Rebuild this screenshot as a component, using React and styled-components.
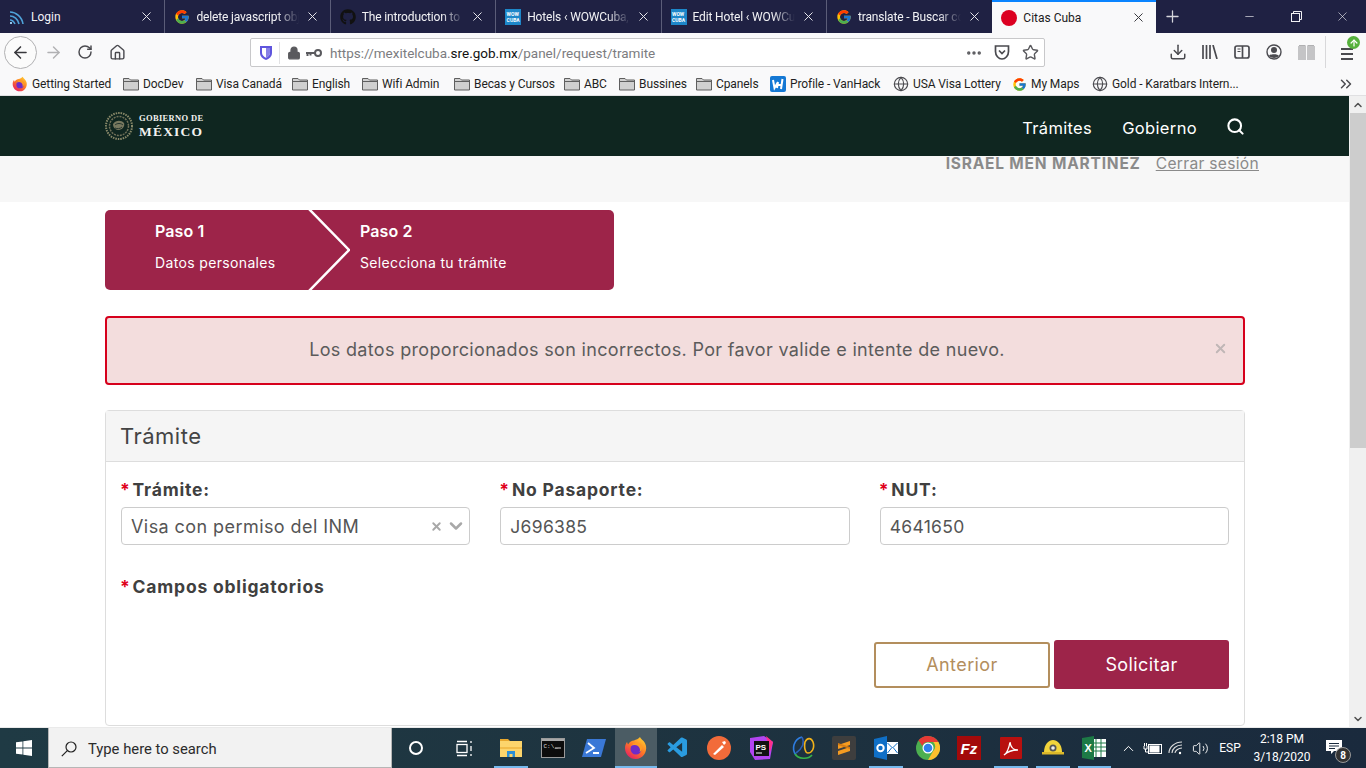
import React from 'react';
import styled, { createGlobalStyle } from 'styled-components';
import {
  ArrowLeft, ArrowRight, ArrowUp, RotateCw, Home, Lock, MoreHorizontal, Star, Download,
  ChevronsRight, Globe, Search, X, Plus, Minus, ChevronUp, ChevronDown, Volume2,
} from 'lucide-react';
import { FcGoogle } from 'react-icons/fc';
import { FaGithub } from 'react-icons/fa';
import { VscVscode } from 'react-icons/vsc';

const GlobalStyle = createGlobalStyle`
  html, body { margin: 0; padding: 0; height: 100%; overflow: hidden; background: #fff; }
  * { box-sizing: border-box; }
  #root { height: 100%; }
`;

const SITE_FONT = '"Inter", "Open Sans", sans-serif';
const UI_FONT = '"Roboto", "Noto Sans", sans-serif';

const Screen = styled.div`
  display: flex;
  flex-direction: column;
  width: 1366px;
  height: 768px;
  font-family: ${UI_FONT};
`;

/* ---------- browser tabs ---------- */
const TabStrip = styled.div`
  display: flex;
  align-items: stretch;
  height: 33px;
  background: #1f2143;
  flex: none;
`;

const Tab = styled.div`
  display: flex;
  align-items: center;
  gap: 6px;
  flex: none;
  width: ${p => (p.$active ? '164px' : '165.4px')};
  padding: 0 10px 0 9px;
  font-size: 12px;
  color: ${p => (p.$active ? '#1c1b22' : '#f2f2f5')};
  background: ${p => (p.$active ? '#f9f9fa' : 'transparent')};
  border-top: ${p => (p.$active ? '2px solid #0a84ff' : 'none')};
  border-right: ${p => (p.$active || p.$noline ? 'none' : '1px solid #5b5d78')};
`;

const TabTitle = styled.span`
  flex: 1;
  min-width: 0;
  white-space: nowrap;
  ${p => p.$fade && 'letter-spacing: -0.15px; mask-image: linear-gradient(to right, #000 78%, transparent 100%);'}
`;

const NewTab = styled.div`
  display: flex;
  align-items: center;
  justify-content: center;
  width: 32px;
  color: #d5d5dc;
`;

const WindowControls = styled.div`
  display: flex;
  margin-left: auto;
`;

const WindowButton = styled.div`
  display: flex;
  align-items: center;
  justify-content: center;
  width: 46.5px;
  color: #f0f0f4;
`;

const WowIcon = styled.span`
  display: flex;
  flex-direction: column;
  align-items: center;
  justify-content: center;
  flex: none;
  width: 16px;
  height: 16px;
  background: #1d87c9;
  color: #fff;
  font: 700 5px/6px ${UI_FONT};
`;

const RedDot = styled.span`
  flex: none;
  width: 16px;
  height: 16px;
  border-radius: 50%;
  background: #dc0021;
`;

/* ---------- browser toolbar ---------- */
const NavBar = styled.div`
  display: flex;
  align-items: center;
  height: 38px;
  padding-left: 4px;
  background: #f9f9fa;
  flex: none;
`;

const BackCircle = styled.div`
  display: flex;
  align-items: center;
  justify-content: center;
  width: 33px;
  height: 33px;
  border: 1px solid #b1b1b3;
  border-radius: 50%;
  color: #38383d;
  background: #fbfbfb;
`;

const ToolSlot = styled.div`
  display: flex;
  align-items: center;
  justify-content: center;
  position: relative;
  flex: none;
  width: 32px;
  height: 32px;
  color: ${p => p.$color || '#4a4a4f'};
`;

const UrlBar = styled.div`
  display: flex;
  align-items: center;
  width: 795px;
  height: 29px;
  margin: 1px 117px 0 117px;
  padding-left: 8px;
  background: #fff;
  border: 1px solid #c8c8ca;
  border-radius: 2px;
  flex: none;
`;

const UrlDivider = styled.span`
  width: 1px;
  height: 22px;
  margin: 0 5px 0 6px;
  background: #e2e2e4;
`;

const UrlText = styled.div`
  flex: 1;
  margin-left: 5px;
  font-size: 13.5px;
  color: #7c7c80;
  white-space: nowrap;
  b { font-weight: 400; color: #111; }
`;

const UrlIcon = styled.span`
  display: flex;
  align-items: center;
  justify-content: center;
  flex: none;
  width: ${p => p.$w || 28}px;
  color: #5a5a5e;
`;

const ToolDivider = styled.span`
  width: 1px;
  height: 32px;
  margin: 0 5px 0 3px;
  background: #d8d8da;
`;

const UpdateBadge = styled.span`
  position: absolute;
  top: 0;
  right: 3px;
  display: flex;
  align-items: center;
  justify-content: center;
  width: 13px;
  height: 13px;
  border-radius: 50%;
  background: #56b13c;
  color: #fff;
`;

const Burger = styled.span`
  display: block;
  width: 12px;
  height: 12px;
  margin-top: 3px;
  border-top: 2px solid #4a4a4f;
  border-bottom: 2px solid #4a4a4f;
  position: relative;
  &::after {
    content: '';
    position: absolute;
    left: 0;
    right: 0;
    top: 3px;
    height: 2px;
    background: #4a4a4f;
  }
`;

/* ---------- bookmarks ---------- */
const BookmarkBar = styled.div`
  display: flex;
  align-items: center;
  height: 25px;
  padding: 2px 0 0 12px;
  background: #f9f9fa;
  border-bottom: 1px solid #e0e0e2;
  flex: none;
`;

const Bookmark = styled.div`
  display: flex;
  align-items: center;
  gap: 4px;
  flex: none;
  width: ${p => p.$w}px;
  font-size: 12px;
  letter-spacing: -0.1px;
  color: #1f1f22;
  white-space: nowrap;
`;

const BookmarkMore = styled.div`
  display: flex;
  margin-left: auto;
  margin-right: 11px;
  color: #4a4a4f;
`;

/* ---------- page ---------- */
const PageArea = styled.div`
  display: flex;
  flex: 1;
  min-height: 0;
  border-bottom: 1px solid #eaeaea;
`;

const Page = styled.main`
  flex: 1;
  min-width: 0;
  overflow: hidden;
  font-family: ${SITE_FONT};
  background: #fff;
`;

const ScrollBar = styled.div`
  display: flex;
  flex-direction: column;
  flex: none;
  width: 17px;
  background: #f0f0f0;
`;

const ScrollArrow = styled.div`
  display: flex;
  align-items: center;
  justify-content: center;
  height: 17px;
  color: #505050;
`;

const ScrollThumb = styled.div`
  height: 335px;
  margin-left: 1px;
  background: #cdcdcd;
`;

const ScrollGap = styled.div`
  flex: 1;
`;

const GovHeader = styled.header`
  display: flex;
  align-items: center;
  justify-content: space-between;
  height: 60px;
  padding: 0 104px 0 105px;
  background: #0f2620;
`;

const Logo = styled.div`
  display: flex;
  align-items: center;
  gap: 6px;
`;

const LogoText = styled.div`
  margin-top: -2px;
  font-family: "Liberation Serif", serif;
  font-weight: 700;
  color: #f3f3f0;
  span { display: block; }
`;

const LogoTop = styled.span`
  font-size: 8.5px;
  line-height: 10px;
  letter-spacing: 0.35px;
`;

const LogoMain = styled.span`
  margin-top: 2px;
  font-size: 13.5px;
  line-height: 13px;
  letter-spacing: 1.2px;
`;

const GovNav = styled.nav`
  display: flex;
  align-items: center;
  gap: 30px;
  padding-top: 4px;
  color: #fff;
  font-size: 16.5px;
  letter-spacing: 0.35px;
`;

const SearchLink = styled.span`
  display: flex;
  margin-left: -1px;
  margin-top: -3px;
`;

const UserStrip = styled.div`
  display: flex;
  justify-content: flex-end;
  align-items: flex-start;
  gap: 15px;
  height: 46px;
  padding-right: 90px;
  background: #f7f7f7;
  color: #8a8a8a;
  line-height: 16px;
`;

const UserName = styled.strong`
  font-size: 15.5px;
  font-weight: 700;
  letter-spacing: 0.8px;
`;

const Logout = styled.a`
  font-size: 15.6px;
  letter-spacing: 0.3px;
  text-decoration: underline;
`;

const Content = styled.div`
  width: 1140px;
  margin-left: 105px;
`;

const Steps = styled.div`
  display: flex;
  position: relative;
  width: 509px;
  height: 80px;
  margin-top: 8px;
  background: #9d2449;
  border-radius: 5px;
  color: #fff;
`;

const Step = styled.div`
  flex: none;
  width: ${p => p.$w}px;
  padding: 12px 0 0 50px;
`;

const StepTitle = styled.div`
  font-size: 16px;
  line-height: 18px;
  font-weight: 600;
  letter-spacing: 0.1px;
`;

const StepText = styled.div`
  margin-top: 14px;
  font-size: 14px;
  line-height: 18px;
  letter-spacing: 0.35px;
`;

const StepArrow = styled.svg`
  position: absolute;
  left: 203px;
  top: 0;
`;

const Alert = styled.div`
  display: flex;
  align-items: center;
  justify-content: center;
  position: relative;
  height: 69px;
  margin-top: 26px;
  padding: 0 36px 2px 0;
  background: #f3dddd;
  border: 2px solid #d6001c;
  border-radius: 4px;
  color: #5b5b5b;
  font-size: 18px;
  letter-spacing: 0.33px;
`;

const AlertClose = styled.span`
  position: absolute;
  right: 15px;
  top: 23px;
  display: flex;
  color: #c0b6b6;
`;

const Card = styled.section`
  height: 316px;
  margin-top: 25px;
  border: 1px solid #ddd;
  border-radius: 4px;
`;

const CardHeader = styled.div`
  display: flex;
  align-items: center;
  height: 51px;
  padding-left: 14px;
  background: #f5f5f5;
  border-bottom: 1px solid #ddd;
  color: #444;
  font-size: 22px;
  letter-spacing: 0.5px;
`;

const CardBody = styled.div`
  padding: 18px 15px 0;
`;

const FormGrid = styled.div`
  display: grid;
  grid-template-columns: repeat(3, 1fr);
  gap: 30px;
`;

const Label = styled.label`
  display: block;
  height: 18px;
  color: #404040;
  font-size: 17.5px;
  line-height: 20px;
  font-weight: 700;
  letter-spacing: 0.8px;
  i { font-style: normal; color: #e0001b; margin-right: 2px; margin-left: -1px; }
`;

const Field = styled.div`
  display: flex;
  align-items: center;
  height: 38px;
  margin-top: 9px;
  padding: 0 9px;
  background: #fff;
  border: 1px solid #ccc;
  border-radius: 4px;
  color: #555;
  font-size: 17.5px;
  letter-spacing: 0.3px;
`;

const FieldValue = styled.span`
  flex: 1;
  ${p => p.$large && 'font-size: 18px; letter-spacing: 0.43px;'}
`;

const SelectIcons = styled.span`
  display: flex;
  align-items: center;
  gap: 3px;
  margin-right: -6px;
  color: #a8a8a8;
`;

const Required = styled(Label)`
  margin-top: 32px;
`;

const Actions = styled.div`
  display: flex;
  justify-content: flex-end;
  align-items: center;
  gap: 4px;
  margin-top: 45px;
`;

const Button = styled.button`
  height: ${p => (p.$primary ? '49px' : '46px')};
  width: ${p => (p.$primary ? '175px' : '176px')};
  padding: 0;
  background: ${p => (p.$primary ? '#9d2449' : '#fff')};
  border: ${p => (p.$primary ? 'none' : '2px solid #b38e5d')};
  border-radius: 3px;
  color: ${p => (p.$primary ? '#fff' : '#b38e5d')};
  font-family: ${SITE_FONT};
  font-size: 18px;
  letter-spacing: 0.4px;
`;

/* ---------- windows taskbar ---------- */
const Taskbar = styled.footer`
  display: flex;
  align-items: stretch;
  height: 40px;
  background: linear-gradient(to right, #1f3a44, #1e3440 45%, #1a2a3d);
  flex: none;
  color: #fff;
`;

const StartButton = styled.div`
  display: flex;
  align-items: center;
  justify-content: center;
  flex: none;
  width: 48px;
`;

const TaskSearch = styled.div`
  display: flex;
  align-items: center;
  gap: 11px;
  flex: none;
  width: 344px;
  padding: 2px 0 0 12px;
  background: #f2f2f2;
  border: 1px solid #b6b6b6;
  border-top: none;
  color: #2b2b2b;
  font-size: 14.8px;
`;

const SystemButton = styled.div`
  display: flex;
  align-items: center;
  justify-content: center;
  flex: none;
  width: 48px;
`;

const AppSlot = styled.div`
  display: flex;
  align-items: center;
  justify-content: center;
  position: relative;
  flex: none;
  width: 41.7px;
  background: ${p => (p.$active ? '#4b5c64' : 'transparent')};
  &::after {
    content: '';
    display: ${p => (p.$open ? 'block' : 'none')};
    position: absolute;
    left: ${p => (p.$active ? 0 : 4)}px;
    right: ${p => (p.$active ? 0 : 4)}px;
    bottom: 0;
    height: 2px;
    background: #76b9ed;
  }
`;

const AppRow = styled.div`
  display: flex;
  flex: none;
  margin-left: 2px;
`;

const Tray = styled.div`
  display: flex;
  align-items: center;
  margin-left: auto;
`;

const TrayIcon = styled.span`
  display: flex;
  align-items: center;
  justify-content: center;
  width: ${p => p.$w || 24}px;
`;

const TrayLang = styled.span`
  width: 36px;
  text-align: center;
  font-size: 12px;
`;

const Clock = styled.div`
  width: 64px;
  margin-left: 2px;
  text-align: center;
  font-size: 12px;
  line-height: 18px;
`;

const Notify = styled.div`
  display: flex;
  align-items: center;
  justify-content: center;
  position: relative;
  width: 40px;
  height: 40px;
  margin-right: 12px;
`;

const NotifyBadge = styled.span`
  position: absolute;
  right: 3px;
  bottom: 5px;
  display: flex;
  align-items: center;
  justify-content: center;
  width: 16px;
  height: 16px;
  border-radius: 50%;
  background: #333;
  border: 1px solid #999;
  font-size: 10px;
  font-weight: 700;
`;

const CmdText = styled.text`
  font-family: "Liberation Mono", monospace;
  font-size: 6px;
  fill: #ddd;
`;

const IconText = styled.text`
  font-family: "Liberation Sans", sans-serif;
  font-weight: 700;
  fill: #fff;
`;

/* ---------- drawn icons ---------- */
const FolderIcon = () => (
  <svg width="16" height="16" viewBox="0 0 16 16">
    <path d="M.5 2.500h5.500l1.500 1.500h8v10h-15z" fill="#d0d0d0" stroke="#5f5f5f" />
    <path d="M1 5.500h14" stroke="#5f5f5f" />
  </svg>
);

const FirefoxIcon = ({ size = 16 }) => (
  <svg width={size} height={size} viewBox="0 0 24 24">
    <defs>
      <linearGradient id={`ff${size}`} x1="0.8" y1="0" x2="0.1" y2="1">
        <stop offset="0" stopColor="#ffcf2f" />
        <stop offset="0.45" stopColor="#ff7a25" />
        <stop offset="1" stopColor="#e3116c" />
      </linearGradient>
    </defs>
    <path d="M16 1c1 2.500 5 4 6 9 1.200 6-3 13-10.500 13C5.500 23 1 18 1 12c0-2.500.8-4.500 2-6l1 2.500C5.500 6 8 4.500 10 4.500 12 3.500 14.500 3 16 1z" fill={`url(#ff${size})`} />
    <circle cx="12" cy="13" r="5.500" fill="#6f2bc7" />
    <path d="M7 10c2-1.500 5-1.500 7 0 2 1.800 2.500 4 1.500 6 3-1 3.500-5 1.500-7.500C14.500 5.500 9 6.500 7 10z" fill="#ff9b24" />
  </svg>
);

const LoginFavicon = () => (
  <svg width="16" height="16" viewBox="0 0 16 16" fill="none" stroke="#4fa3d9" strokeWidth="1.600">
    <path d="M1 3c6 0 12 5 13 12M1 7c4 0 8 3 9 8M1 11c2 0 4 2 5 4" />
    <path d="M1 14h2" stroke="#8fc6ea" strokeWidth="2" />
  </svg>
);

const VanHackIcon = () => (
  <svg width="16" height="16" viewBox="0 0 16 16">
    <rect width="16" height="16" rx="2" fill="#1478d4" />
    <path d="M3 4l1.500 8L8 6M8 6l-1 6M12.500 3l-1.500 10M7.500 9h4" stroke="#fff" strokeWidth="2" fill="none" />
  </svg>
);

const ShieldIcon = () => (
  <svg width="14" height="16" viewBox="0 0 14 16">
    <path d="M1 1h12v7c0 3.500-3 6-6 7-3-1-6-3.500-6-7z" fill="#5f55dd" />
    <path d="M3 3h8v5c0 2.300-2 3.800-4 4.700-2-.9-4-2.400-4-4.700z" fill="#fff" />
    <path d="M7 3h4v5c0 2.300-2 3.800-4 4.700z" fill="#5f55dd" opacity=".75" />
  </svg>
);

const KeyIcon = () => (
  <svg width="17" height="10" viewBox="0 0 17 10" fill="none">
    <circle cx="12" cy="5" r="3" stroke="#5a5a5e" strokeWidth="2" />
    <path d="M0 5h9M1.500 5v3M4.500 5v2.500" stroke="#5a5a5e" strokeWidth="2" />
  </svg>
);

const PocketIcon = () => (
  <svg width="16" height="15" viewBox="0 0 16 15" fill="none" stroke="#4a4a4f" strokeWidth="1.700">
    <path d="M1.500 1h13v5.500C14.500 10.500 11.500 14 8 14S1.500 10.500 1.500 6.500z" />
    <path d="M5 5.500l3 3 3-3" />
  </svg>
);

const LibraryIcon = () => (
  <svg width="16" height="14" viewBox="0 0 16 14" stroke="#4a4a4f" strokeWidth="1.700" fill="none">
    <path d="M1 0v14M4.500 0v14M8 0v14M11 0l4 14" />
  </svg>
);

const SidebarIcon = () => (
  <svg width="16" height="14" viewBox="0 0 16 14" fill="none" stroke="#4a4a4f">
    <rect x="1" y="1" width="14" height="12" rx="2" strokeWidth="1.700" />
    <path d="M8.500 1v12" strokeWidth="1.700" />
    <path d="M3.500 4h3M3.500 6.500h3" />
  </svg>
);

const AccountIcon = () => (
  <svg width="16" height="16" viewBox="0 0 16 16" fill="none">
    <circle cx="8" cy="8" r="7" stroke="#4a4a4f" strokeWidth="1.400" />
    <circle cx="8" cy="6" r="3" fill="#4a4a4f" />
    <path d="M3 12c1-2.500 9-2.500 10 0-2.500 2.500-7.500 2.500-10 0z" fill="#4a4a4f" />
  </svg>
);

const ReaderIcon = () => (
  <svg width="17" height="15" viewBox="0 0 17 15">
    <path d="M0 1h8v14H0zM9 1h8v14H9z" fill="#c4c4c6" />
    <path d="M1 0h6.500v1H1zM9.500 0H16v1H9.500z" fill="#b0b0b2" />
  </svg>
);

const RestoreIcon = () => (
  <svg width="11" height="11" viewBox="0 0 11 11" fill="none" stroke="#f0f0f4">
    <rect x=".5" y="2.500" width="8" height="8" />
    <path d="M2.500 2.500v-2h8v8h-2" />
  </svg>
);

const Seal = () => (
  <svg width="28" height="28" viewBox="0 0 28 28" fill="none">
    <circle cx="14" cy="14" r="13" stroke="#8a8a6a" strokeWidth="2" strokeDasharray="1.500 1" />
    <circle cx="14" cy="14" r="9.500" stroke="#6f7058" strokeWidth="1.500" strokeDasharray="2 1" />
    <path d="M8 12c3-4 8-4 11-1 1 3-1 6-5 7-3 0-6-2-6-6z" fill="#77785f" />
    <path d="M10 13c2-2 6-2 8 0M10 16c2 1 5 1 7-1" stroke="#24352e" />
  </svg>
);

const WindowsLogo = () => (
  <svg width="16" height="16" viewBox="0 0 16 16" fill="#fff">
    <path d="M0 2.300l6.500-.9v6.200H0zM7.300 1.300L16 0v7.600H7.300zM0 8.400h6.500v6.200L0 13.700zM7.300 8.400H16V16l-8.700-1.200z" />
  </svg>
);

const SearchGlass = () => (
  <svg width="16" height="16" viewBox="0 0 16 16" fill="none" stroke="#222" strokeWidth="1.200">
    <circle cx="10" cy="6" r="5" />
    <path d="M6.300 9.700L.8 15.200" />
  </svg>
);

const TaskViewIcon = () => (
  <svg width="17" height="17" viewBox="0 0 17 17" fill="none" stroke="#fff" strokeWidth="1.300">
    <rect x="1" y="4.500" width="10" height="8" />
    <path d="M1 1.500h10M1 15.500h10M15 1v2M15 6v5M15 14v2" />
  </svg>
);

const ExplorerIcon = () => (
  <svg width="24" height="24" viewBox="0 0 24 24">
    <path d="M1 3h8l2 2H1z" fill="#e8a82e" />
    <path d="M1 5h22v16H1z" fill="#fcd56c" />
    <path d="M1 11h22v2H1z" fill="#f2bd4a" />
    <path d="M8 15h8v6h-2.500v-3h-3v3H8z" fill="#2d8fd5" />
  </svg>
);

const CmdIcon = () => (
  <svg width="24" height="20" viewBox="0 0 24 20">
    <rect x=".5" y=".5" width="23" height="19" fill="#0c0c0c" stroke="#9a9a9a" />
    <rect x="1" y="1" width="22" height="2" fill="#a8a8a8" />
    <CmdText x="2.500" y="10">C:\_</CmdText>
    <path d="M14 10h6" stroke="#ddd" />
  </svg>
);

const PowerShellIcon = () => (
  <svg width="24" height="20" viewBox="0 0 24 20">
    <path d="M5 1h19l-5 18H0z" fill="#3a78d6" />
    <path d="M6 5l6 5-8 5M11 15h6" stroke="#fff" strokeWidth="1.800" fill="none" />
  </svg>
);

const PostmanIcon = () => (
  <svg width="24" height="24" viewBox="0 0 24 24">
    <circle cx="12" cy="12" r="12" fill="#f26b3a" />
    <path d="M6 18l9-9 2 2-9 8zM15 6l3-1 1 2-2 2z" fill="#fff" />
  </svg>
);

const PhpStormIcon = () => (
  <svg width="24" height="24" viewBox="0 0 24 24">
    <path d="M1 2l14-2 9 6-3 17-15 1-5-8z" fill="#b345f1" />
    <path d="M17 0l7 6-3 10z" fill="#ff318c" />
    <rect x="5" y="5" width="15" height="15" fill="#111" />
    <IconText x="6.500" y="14" fontSize="8">PS</IconText>
    <path d="M7 17h6" stroke="#fff" />
  </svg>
);

const RingsIcon = () => (
  <svg width="24" height="26" viewBox="0 0 24 26" fill="none" strokeWidth="1.600">
    <path d="M5 20C0 14 3 4 11 2" stroke="#2e7de0" />
    <path d="M11 2c3 6 0 12-6 16" stroke="#2c5fb8" />
    <path d="M14 7c2-4 6-5 8 0 2 6-1 11-5 11-3 0-4-6-3-11z" stroke="#f2b21a" />
    <path d="M4 19c3 5 13 6 17 1" stroke="#37b34a" />
  </svg>
);

const SublimeIcon = () => (
  <svg width="24" height="24" viewBox="0 0 24 24">
    <rect width="24" height="24" rx="2" fill="#3e3e3e" />
    <path d="M18 5v4L6 13V9zM18 11v4L6 19v-4z" fill="#f59b21" />
    <path d="M6 9l12 4v-2L6 7z" fill="#d47b12" />
  </svg>
);

const OutlookIcon = () => (
  <svg width="24" height="24" viewBox="0 0 24 24">
    <path d="M0 3l13-3v24L0 21z" fill="#0f6fc6" />
    <rect x="13" y="6" width="11" height="12" fill="#fff" />
    <path d="M13.500 7l5 5 5-5M13.500 17l4-5M23.500 17l-4-5" stroke="#0f6fc6" fill="none" />
    <circle cx="6.500" cy="12" r="3.200" stroke="#fff" strokeWidth="2" fill="none" />
  </svg>
);

const ChromeIcon = () => (
  <svg width="24" height="24" viewBox="0 0 24 24">
    <circle cx="12" cy="12" r="12" fill="#4caf50" />
    <path d="M12 0a12 12 0 0 1 10.400 6H12a6 6 0 0 0-5.700 4L2.500 4.300A12 12 0 0 1 12 0z" fill="#e53935" />
    <path d="M22.400 6A12 12 0 0 1 12 24l5.200-9a6 6 0 0 0 0-9z" fill="#fbc02d" />
    <circle cx="12" cy="12" r="5.500" fill="#fff" />
    <circle cx="12" cy="12" r="4.300" fill="#2f80ed" />
  </svg>
);

const FileZillaIcon = () => (
  <svg width="24" height="24" viewBox="0 0 24 24">
    <rect width="24" height="24" fill="#a30a0a" />
    <IconText x="3.500" y="18" fontSize="15" fontStyle="italic">Fz</IconText>
  </svg>
);

const PdfIcon = () => (
  <svg width="22" height="22" viewBox="0 0 22 22">
    <rect width="22" height="22" rx="1" fill="#b8100f" />
    <path d="M4 18c3-2 5-7 6-13 .5 5 3 8 8 8-5 0-10 1-14 5z" fill="none" stroke="#fff" strokeWidth="1.300" />
  </svg>
);

const HelmetIcon = () => (
  <svg width="22" height="16" viewBox="0 0 22 16">
    <path d="M2 12C2 4 7 0 11 0s9 4 9 12z" fill="#f2d43b" />
    <path d="M0 12h22v2.500H0z" fill="#dcb82a" />
    <circle cx="11" cy="8" r="3.500" fill="#555" />
    <circle cx="11" cy="8" r="1.800" fill="#eee" />
  </svg>
);

const ExcelIcon = () => (
  <svg width="24" height="24" viewBox="0 0 24 24">
    <rect x="10" y="3" width="14" height="18" fill="#fff" />
    <path d="M14 3v18M19 3v18M10 7h14M10 11h14M10 15h14" stroke="#1d7a46" />
    <path d="M0 2l12-2v24L0 22z" fill="#1d7a46" />
    <IconText x="2.500" y="16" fontSize="11">X</IconText>
  </svg>
);

const BatteryIcon = () => (
  <svg width="19" height="13" viewBox="0 0 19 13" fill="none" stroke="#fff">
    <rect x="5.500" y="2.500" width="13" height="9" />
    <rect x="7" y="4" width="9" height="6" fill="#fff" />
    <path d="M1 4v3h3V4M2.500 7v3h3M1.500 4V1M3.500 4V1" />
  </svg>
);

const WifiIcon = () => (
  <svg width="16" height="14" viewBox="0 0 16 14" fill="none" stroke="#ddd" strokeWidth="1.100">
    <path d="M1 12C1 6 7 1 14 1M4 12c0-4 4-8 10-8M7 12c0-2 3-5 7-5" />
    <circle cx="12" cy="12" r="1.200" fill="#fff" stroke="none" />
  </svg>
);

const NotifyIcon = () => (
  <svg width="18" height="18" viewBox="0 0 18 18">
    <path d="M1 1h16v11h-8l-3 3v-3H1z" fill="#fff" />
    <path d="M4 4.500h10M4 7h10M4 9.500h6" stroke="#1a2a3d" />
  </svg>
);

/* ---------- data ---------- */
const tabs = [
  { title: 'Login', icon: <LoginFavicon /> },
  { title: 'delete javascript obj', icon: <FcGoogle size={16} />, fade: true },
  { title: 'The introduction to', icon: <FaGithub size={16} color="#111" />, fade: true },
  { title: 'Hotels ‹ WOWCuba,', icon: <WowIcon>WOW<br />CUBA</WowIcon>, fade: true },
  { title: 'Edit Hotel ‹ WOWCu', icon: <WowIcon>WOW<br />CUBA</WowIcon>, fade: true },
  { title: 'translate - Buscar co', icon: <FcGoogle size={16} />, fade: true, noline: true },
];

const bookmarks = [
  { label: 'Getting Started', w: 111, icon: <FirefoxIcon /> },
  { label: 'DocDev', w: 73, icon: <FolderIcon /> },
  { label: 'Visa Canadá', w: 96, icon: <FolderIcon /> },
  { label: 'English', w: 70, icon: <FolderIcon /> },
  { label: 'Wifi Admin', w: 92, icon: <FolderIcon /> },
  { label: 'Becas y Cursos', w: 110, icon: <FolderIcon /> },
  { label: 'ABC', w: 55, icon: <FolderIcon /> },
  { label: 'Bussines', w: 77, icon: <FolderIcon /> },
  { label: 'Cpanels', w: 74, icon: <FolderIcon /> },
  { label: 'Profile - VanHack', w: 123, icon: <VanHackIcon /> },
  { label: 'USA Visa Lottery', w: 119, icon: <Globe size={16} strokeWidth={1.7} color="#4a4a4f" /> },
  { label: 'My Maps', w: 80, icon: <FcGoogle size={15} /> },
  { label: 'Gold - Karatbars Intern...', w: 150, icon: <Globe size={16} strokeWidth={1.7} color="#4a4a4f" /> },
];

const apps = [
  { icon: <ExplorerIcon />, open: true },
  { icon: <CmdIcon /> },
  { icon: <PowerShellIcon /> },
  { icon: <FirefoxIcon size={24} />, open: true, active: true },
  { icon: <VscVscode size={24} color="#2a9ce0" /> },
  { icon: <PostmanIcon /> },
  { icon: <PhpStormIcon /> },
  { icon: <RingsIcon /> },
  { icon: <SublimeIcon /> },
  { icon: <OutlookIcon />, open: true },
  { icon: <ChromeIcon /> },
  { icon: <FileZillaIcon /> },
  { icon: <PdfIcon />, open: true },
  { icon: <HelmetIcon />, open: true },
  { icon: <ExcelIcon />, open: true },
];

const App = () => (
  <Screen>
    <GlobalStyle />

    <TabStrip>
      {tabs.map(tab => (
        <Tab key={tab.title} $noline={tab.noline}>
          {tab.icon}
          <TabTitle $fade={tab.fade}>{tab.title}</TabTitle>
          <X size={15} strokeWidth={1.6} color="#e4e4ea" />
        </Tab>
      ))}
      <Tab $active>
        <RedDot />
        <TabTitle>Citas Cuba</TabTitle>
        <X size={15} strokeWidth={1.6} color="#3a3a3f" />
      </Tab>
      <NewTab><Plus size={19} strokeWidth={1.6} /></NewTab>
      <WindowControls>
        <WindowButton><Minus size={13} strokeWidth={1.2} /></WindowButton>
        <WindowButton><RestoreIcon /></WindowButton>
        <WindowButton><X size={15} strokeWidth={1} /></WindowButton>
      </WindowControls>
    </TabStrip>

    <NavBar>
      <BackCircle><ArrowLeft size={19} strokeWidth={2} /></BackCircle>
      <ToolSlot $color="#b1b1b3"><ArrowRight size={19} strokeWidth={1.8} /></ToolSlot>
      <ToolSlot><RotateCw size={16} strokeWidth={2.2} /></ToolSlot>
      <ToolSlot><Home size={17} strokeWidth={2} /></ToolSlot>
      <UrlBar>
        <ShieldIcon />
        <UrlDivider />
        <UrlIcon $w={18}><Lock size={14} strokeWidth={2.4} fill="#5a5a5e" /></UrlIcon>
        <UrlIcon $w={22}><KeyIcon /></UrlIcon>
        <UrlText>https://mexitelcuba.<b>sre.gob.mx</b>/panel/request/tramite</UrlText>
        <UrlIcon><MoreHorizontal size={18} strokeWidth={2.6} /></UrlIcon>
        <UrlIcon><PocketIcon /></UrlIcon>
        <UrlIcon><Star size={17} strokeWidth={2} /></UrlIcon>
      </UrlBar>
      <ToolSlot><Download size={18} strokeWidth={2} /></ToolSlot>
      <ToolSlot><LibraryIcon /></ToolSlot>
      <ToolSlot><SidebarIcon /></ToolSlot>
      <ToolSlot><AccountIcon /></ToolSlot>
      <ToolSlot><ReaderIcon /></ToolSlot>
      <ToolDivider />
      <ToolSlot>
        <Burger />
        <UpdateBadge><ArrowUp size={10} strokeWidth={3} /></UpdateBadge>
      </ToolSlot>
    </NavBar>

    <BookmarkBar>
      {bookmarks.map(b => (
        <Bookmark key={b.label} $w={b.w}>
          {b.icon}
          {b.label}
        </Bookmark>
      ))}
      <BookmarkMore><ChevronsRight size={18} strokeWidth={2} /></BookmarkMore>
    </BookmarkBar>

    <PageArea>
      <Page>
        <GovHeader>
          <Logo>
            <Seal />
            <LogoText>
              <LogoTop>GOBIERNO DE</LogoTop>
              <LogoMain>MÉXICO</LogoMain>
            </LogoText>
          </Logo>
          <GovNav>
            <span>Trámites</span>
            <span>Gobierno</span>
            <SearchLink><Search size={19} strokeWidth={2.6} /></SearchLink>
          </GovNav>
        </GovHeader>

        <UserStrip>
          <UserName>ISRAEL MEN MARTINEZ</UserName>
          <Logout>Cerrar sesión</Logout>
        </UserStrip>

        <Content>
          <Steps>
            <Step $w={205}>
              <StepTitle>Paso 1</StepTitle>
              <StepText>Datos personales</StepText>
            </Step>
            <Step $w={304}>
              <StepTitle>Paso 2</StepTitle>
              <StepText>Selecciona tu trámite</StepText>
            </Step>
            <StepArrow width="42" height="80" viewBox="0 0 42 80" fill="none">
              <path d="M1 -1L41 40L1 81" stroke="#fff" strokeWidth="2.500" />
            </StepArrow>
          </Steps>

          <Alert>
            Los datos proporcionados son incorrectos. Por favor valide e intente de nuevo.
            <AlertClose><X size={15} strokeWidth={3} /></AlertClose>
          </Alert>

          <Card>
            <CardHeader>Trámite</CardHeader>
            <CardBody>
              <FormGrid>
                <div>
                  <Label><i>*</i>Trámite:</Label>
                  <Field>
                    <FieldValue $large>Visa con permiso del INM</FieldValue>
                    <SelectIcons>
                      <X size={13} strokeWidth={3.5} />
                      <ChevronDown size={20} strokeWidth={3} />
                    </SelectIcons>
                  </Field>
                </div>
                <div>
                  <Label><i>*</i>No Pasaporte:</Label>
                  <Field><FieldValue>J696385</FieldValue></Field>
                </div>
                <div>
                  <Label><i>*</i>NUT:</Label>
                  <Field><FieldValue>4641650</FieldValue></Field>
                </div>
              </FormGrid>
              <Required><i>*</i>Campos obligatorios</Required>
              <Actions>
                <Button>Anterior</Button>
                <Button $primary>Solicitar</Button>
              </Actions>
            </CardBody>
          </Card>
        </Content>
      </Page>

      <ScrollBar>
        <ScrollArrow><ChevronUp size={12} strokeWidth={3} /></ScrollArrow>
        <ScrollThumb />
        <ScrollGap />
        <ScrollArrow><ChevronDown size={12} strokeWidth={3} /></ScrollArrow>
      </ScrollBar>
    </PageArea>

    <Taskbar>
      <StartButton><WindowsLogo /></StartButton>
      <TaskSearch>
        <SearchGlass />
        Type here to search
      </TaskSearch>
      <SystemButton>
        <svg width="16" height="16" viewBox="0 0 16 16" fill="none" stroke="#fff" strokeWidth="2"><circle cx="8" cy="8" r="6" /></svg>
      </SystemButton>
      <SystemButton><TaskViewIcon /></SystemButton>
      <AppRow>
        {apps.map((app, i) => (
          <AppSlot key={i} $open={app.open} $active={app.active}>{app.icon}</AppSlot>
        ))}
      </AppRow>
      <Tray>
        <TrayIcon><ChevronUp size={17} strokeWidth={1.4} /></TrayIcon>
        <TrayIcon><BatteryIcon /></TrayIcon>
        <TrayIcon><WifiIcon /></TrayIcon>
        <TrayIcon><Volume2 size={17} strokeWidth={1.3} /></TrayIcon>
        <TrayLang>ESP</TrayLang>
        <Clock>2:18 PM<br />3/18/2020</Clock>
        <Notify>
          <NotifyIcon />
          <NotifyBadge>8</NotifyBadge>
        </Notify>
      </Tray>
    </Taskbar>
  </Screen>
);

export default App;
